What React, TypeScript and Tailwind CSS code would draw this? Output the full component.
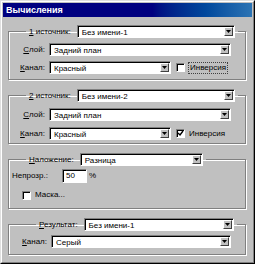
import React from "react";

const font = { fontFamily: '"Liberation Sans", Arial, sans-serif' };

function Acc({ text }: { text: string }) {
  return (
    <>
      <u>{text[0]}</u>
      {text.slice(1)}
    </>
  );
}

function Arrow() {
  return (
    <svg width="5" height="3" viewBox="0 0 5 3">
      <path d="M0 0h5L2.5 3z" fill="#000" />
    </svg>
  );
}

function Select({ value, w }: { value: string; w: string }) {
  return (
    <div
      className={`${w} flex h-[13px] shrink-0 bg-white border border-t-[#808080] border-l-[#808080] border-b-white border-r-white shadow-[inset_1px_1px_0_#000]`}
    >
      <span className="flex-1 truncate pl-[4px] pt-[1px] text-[8px] leading-[11px] text-black">{value}</span>
      <span className="my-[1px] mr-[1px] flex w-[9px] items-center justify-center bg-[#c0c0c0] border border-t-white border-l-white border-b-[#404040] border-r-[#404040]">
        <Arrow />
      </span>
    </div>
  );
}

function Check({ checked }: { checked?: boolean }) {
  return (
    <span className="flex h-[9px] w-[9px] shrink-0 items-center justify-center bg-white border border-t-[#808080] border-l-[#808080] border-b-white border-r-white shadow-[inset_1px_1px_0_#000]">
      {checked && (
        <svg width="7" height="7" viewBox="0 0 7 7">
          <path d="M1 3l2 2 3-4" stroke="#000" strokeWidth="1.4" fill="none" />
        </svg>
      )}
    </span>
  );
}

function Group({
  legend,
  legendMl,
  className,
  children,
}: {
  legend: React.ReactNode;
  legendMl: string;
  className: string;
  children: React.ReactNode;
}) {
  return (
    <fieldset
      className={`border border-[#808080] shadow-[inset_1px_1px_0_#fff,1px_1px_0_#fff] ${className}`}
    >
      <legend className={`${legendMl} flex items-center px-[3px]`}>{legend}</legend>
      {children}
    </fieldset>
  );
}

function Row({ label, children, lw = "w-[40px]" }: { label: string; children: React.ReactNode; lw?: string }) {
  return (
    <div className="flex items-center">
      <span className={`${lw} shrink-0 pr-[4px] text-right`}>
        <Acc text={label} />
      </span>
      {children}
    </div>
  );
}

export default function App() {
  return (
    <div className="h-[264px] w-[255px] bg-[#c0c0c0] text-[8px] leading-[10px] text-black" style={font}>
      <div className="flex h-full flex-col border border-t-[#dfdfdf] border-l-[#dfdfdf] border-b-black border-r-black">
        <div className="flex h-full flex-col border border-t-white border-l-white border-b-[#808080] border-r-[#808080] px-[1px] pt-[1px]">
          {/* TITLE */}
          <div className="flex h-[14px] shrink-0 items-center bg-gradient-to-r from-[#000080] from-60% to-[#2c74b4] pl-[3px]">
            <span className="text-[9px] font-bold text-white">Вычисления</span>
          </div>

          <div className="flex flex-col pl-[5px] pr-[6px]">
            {/* SOURCE 1 */}
            <Group
              legendMl="ml-[17px]"
              className="mt-[8px] h-[55px]"
              legend={
                <>
                  <span className="mr-[6px]">
                    <Acc text="1 источник:" />
                  </span>
                  <Select value="Без имени-1" w="w-[158px]" />
                </>
              }
            >
              <div className="flex flex-col gap-[5px] pt-[5px]">
                <Row label="Слой:">
                  <Select value="Задний план" w="w-[182px]" />
                </Row>
                <Row label="Канал:">
                  <Select value="Красный" w="w-[122px]" />
                  <span className="ml-[5px] flex items-center gap-[3px]">
                    <Check />
                    <span className="border border-dotted border-[#404040] px-[1px]">Инверсия</span>
                  </span>
                </Row>
              </div>
            </Group>

            {/* SOURCE 2 */}
            <Group
              legendMl="ml-[17px]"
              className="mt-[9px] h-[55px]"
              legend={
                <>
                  <span className="mr-[6px]">
                    <Acc text="2 источник:" />
                  </span>
                  <Select value="Без имени-2" w="w-[158px]" />
                </>
              }
            >
              <div className="flex flex-col gap-[6px] pt-[6px]">
                <Row label="Слой:">
                  <Select value="Задний план" w="w-[182px]" />
                </Row>
                <Row label="Канал:">
                  <Select value="Красный" w="w-[122px]" />
                  <span className="ml-[5px] flex items-center gap-[4px]">
                    <Check checked />
                    <span>Инверсия</span>
                  </span>
                </Row>
              </div>
            </Group>

            {/* BLENDING */}
            <Group
              legendMl="ml-[17px]"
              className="mt-[9px] h-[56px]"
              legend={
                <>
                  <span className="mr-[6px]">
                    <Acc text="Наложение:" />
                  </span>
                  <Select value="Разница" w="w-[123px]" />
                </>
              }
            >
              <div className="flex flex-col pt-[3px]">
                <div className="flex items-center">
                  <span className="ml-[3px] w-[50px] shrink-0">Непрозр.:</span>
                  <span className="flex h-[14px] w-[25px] items-center bg-white border border-t-[#808080] border-l-[#808080] border-b-white border-r-white pl-[3px] shadow-[inset_1px_1px_0_#000]">
                    50
                  </span>
                  <span className="ml-[2px]">%</span>
                </div>
                <div className="mt-[7px] flex items-center gap-[4px] pl-[13px]">
                  <Check />
                  <span>Маска...</span>
                </div>
              </div>
            </Group>

            {/* RESULT */}
            <Group
              legendMl="ml-[27px]"
              className="mt-[9px] h-[37px]"
              legend={
                <>
                  <span className="mr-[6px]">
                    <Acc text="Результат:" />
                  </span>
                  <Select value="Без имени-1" w="w-[150px]" />
                </>
              }
            >
              <div className="flex flex-col pt-[4px]">
                <Row label="Канал:" lw="w-[42px]">
                  <Select value="Серый" w="w-[180px]" />
                </Row>
              </div>
            </Group>
          </div>
        </div>
      </div>
    </div>
  );
}
